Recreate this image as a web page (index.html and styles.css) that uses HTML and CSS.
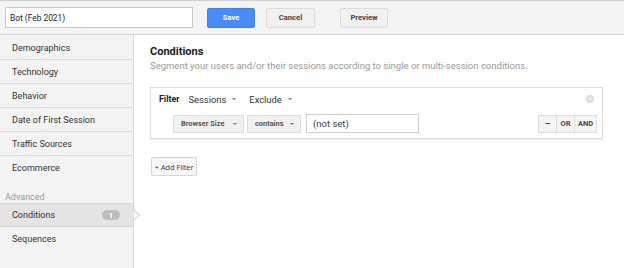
FILE: index.html
```html
<!DOCTYPE html>
<html>
<head>
<meta charset="utf-8">
<link rel="stylesheet" href="styles.css">
</head>
<body>
<div class="topbar">
  <div class="name-input">Bot (Feb 2021)</div>
  <button class="btn btn-save">Save</button>
  <button class="btn btn-cancel">Cancel</button>
  <button class="btn btn-preview">Preview</button>
</div>
<div class="main">
  <nav class="sidebar">
    <div class="nav-item">Demographics</div>
    <div class="nav-item">Technology</div>
    <div class="nav-item">Behavior</div>
    <div class="nav-item">Date of First Session</div>
    <div class="nav-item">Traffic Sources</div>
    <div class="nav-item no-border">Ecommerce</div>
    <div class="nav-section">Advanced</div>
    <div class="nav-item active">Conditions <span class="badge">1</span>
      <svg class="pointer" width="8" height="12" viewBox="0 0 8 12"><polygon points="0,0.5 7,6 0,11.5" fill="#f7f7f7" stroke="#cfcfcf" stroke-width="1"/></svg>
    </div>
    <div class="nav-item no-border">Sequences</div>
  </nav>
  <section class="content">
    <h1 class="title">Conditions</h1>
    <p class="subtitle">Segment your users and/or their sessions according to single or multi-session conditions.</p>
    <div class="filter-box">
      <div class="filter-head">
        <span class="filter-label">Filter</span>
        <span class="dd">Sessions <span class="caret"></span></span>
        <span class="dd">Exclude <span class="caret"></span></span>
        <span class="close"><svg width="8" height="8" viewBox="0 0 8 8"><circle cx="4" cy="4" r="4" fill="#dcdcdc"/><path d="M2.6 2.6 L5.4 5.4 M5.4 2.6 L2.6 5.4" stroke="#fff" stroke-width="1"/></svg></span>
      </div>
      <div class="filter-row">
        <span class="sel sel-dim">Browser Size <span class="caret"></span></span>
        <span class="sel sel-op">contains <span class="caret"></span></span>
        <span class="val">(not set)</span>
        <span class="logic">
          <span class="lbtn lminus">–</span><span class="lbtn">OR</span><span class="lbtn">AND</span>
        </span>
      </div>
    </div>
    <button class="add-filter">+ Add Filter</button>
  </section>
</div>
</body>
</html>
```
FILE: styles.css
```css
* { box-sizing: border-box; }
html, body { margin: 0; padding: 0; }
body {
  width: 624px;
  height: 268px;
  overflow: hidden;
  font-family: Roboto, "Liberation Sans", Arial, sans-serif;
  color: #333;
  background: #fff;
}
.topbar {
  height: 35px;
  border-top: 1px solid #cfcfcf;
  border-bottom: 1px solid #d4d4d4;
  background: #f4f4f4;
  display: flex;
  align-items: center;
  padding-left: 5px;
}
.name-input {
  width: 188px;
  height: 21px;
  background: #fff;
  border: 1px solid #c8c8c8;
  font-size: 8.4px;
  color: #222;
  padding-left: 4px;
  display: flex;
  align-items: center;
}
.btn {
  height: 20px;
  border-radius: 2px;
  font-family: Roboto, Arial, sans-serif;
  font-size: 7.6px;
  font-weight: bold;
  padding: 0;
  cursor: pointer;
}
.btn-save {
  margin-left: 14px;
  width: 48px;
  background: #4a8cf6;
  border: 1px solid #3f82ee;
  color: #fff;
}
.btn-cancel {
  margin-left: 11px;
  width: 49px;
  background: #f1f1f1;
  border: 1px solid #dcdcdc;
  color: #444;
}
.btn-preview {
  margin-left: 25px;
  width: 48px;
  background: #f1f1f1;
  border: 1px solid #dcdcdc;
  color: #444;
}
.main {
  display: flex;
  height: 233px;
}
.sidebar {
  width: 134px;
  flex: none;
  background: #f4f4f4;
  border-right: 1px solid #d8d8d8;
  padding-top: 1px;
}
.nav-item {
  position: relative;
  height: 24px;
  border-bottom: 1px solid #dadada;
  font-size: 9px;
  color: #333;
  padding-left: 12px;
  display: flex;
  align-items: center;
}
.nav-item.no-border { border-bottom: none; height: 24px; }
.nav-section {
  height: 23px;
  font-size: 9px;
  color: #9a9a9a;
  padding-left: 5px;
  display: flex;
  align-items: flex-end;
  padding-bottom: 1px;
}
.nav-item.active {
  background: #e4e4e4;
  border-top: 1px solid #d6d6d6;
  border-bottom: 1px solid #d6d6d6;
}
.badge {
  position: absolute;
  left: 102px;
  top: 6px;
  width: 18px;
  height: 10px;
  border-radius: 5px;
  background: #bdbdbd;
  color: #fff;
  font-size: 7.5px;
  font-weight: bold;
  display: flex;
  align-items: center;
  justify-content: center;
}
.pointer {
  position: absolute;
  right: -8px;
  top: 5px;
}
.content {
  flex: 1;
  padding-left: 16px;
  padding-top: 10px;
}
.title {
  margin: 0;
  font-size: 11px;
  font-weight: bold;
  color: #222;
  line-height: 14px;
}
.subtitle {
  margin: 0;
  font-size: 9.5px;
  color: #999;
  line-height: 13px;
}
.filter-box {
  margin-top: 15px;
  width: 453px;
  height: 52px;
  border: 1px solid #dcdcdc;
  box-shadow: 0 1px 1px rgba(0,0,0,0.05);
  padding: 5px 5px 0 8px;
}
.filter-head {
  display: flex;
  align-items: center;
  height: 12px;
  font-size: 9.4px;
}
.filter-label {
  font-weight: bold;
  color: #222;
  font-size: 8.8px;
  margin-right: 9px;
}
.dd {
  color: #333;
  display: inline-flex;
  align-items: center;
  margin-right: 13px;
}
.caret {
  display: inline-block;
  width: 0;
  height: 0;
  border-left: 2.5px solid transparent;
  border-right: 2.5px solid transparent;
  border-top: 2.5px solid #777;
  margin-left: 6px;
}
.close {
  margin-left: auto;
  margin-right: 3px;
  display: flex;
}
.filter-row {
  display: flex;
  align-items: center;
  margin-top: 9px;
  padding-left: 14px;
}
.sel {
  height: 18px;
  background: #f1f1f1;
  border: 1px solid #dcdcdc;
  font-size: 7.4px;
  font-weight: bold;
  color: #555;
  display: flex;
  align-items: center;
  padding-left: 7px;
}
.sel .caret { margin-left: auto; margin-right: 6px; }
.sel-dim { width: 71px; }
.sel-op { width: 54px; margin-left: 3px; }
.val {
  margin-left: 5px;
  width: 113px;
  height: 19px;
  border: 1px solid #cfcfcf;
  font-size: 9.5px;
  color: #444;
  display: flex;
  align-items: center;
  padding-left: 6px;
}
.logic {
  margin-left: auto;
  margin-right: 0;
  display: flex;
  border: 1px solid #dcdcdc;
  height: 18px;
}
.lbtn {
  background: #f5f5f5;
  font-size: 7.4px;
  font-weight: bold;
  color: #444;
  display: flex;
  align-items: center;
  justify-content: center;
  border-left: 1px solid #dcdcdc;
  width: 18px;
}
.lbtn:first-child { border-left: none; width: 17px; }
.lbtn:last-child { width: 22px; }
.lminus { font-size: 9px; }
.add-filter {
  display: block;
  margin-top: 18px;
  margin-left: 1px;
  width: 46px;
  height: 19px;
  padding: 0;
  background: #f7f7f7;
  border: 1px solid #d8d8d8;
  border-radius: 2px;
  font-family: "Open Sans", Roboto, sans-serif;
  font-size: 7.8px;
  letter-spacing: -0.2px;
  color: #444;
}
```
